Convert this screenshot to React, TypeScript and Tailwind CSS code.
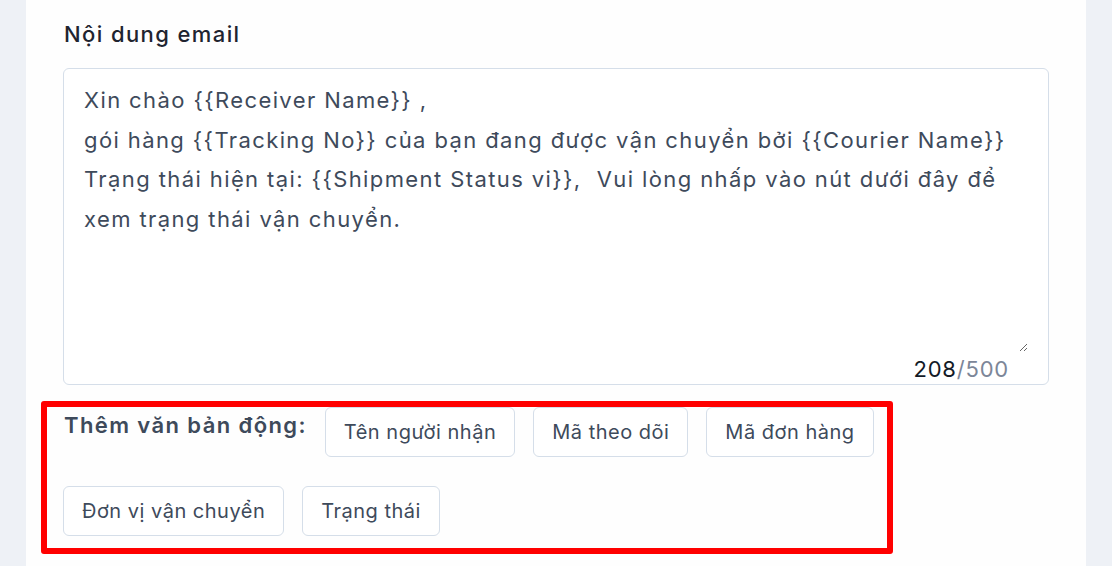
import React from "react";

const body =
  "Xin chào {{Receiver Name}} ,\ngói hàng {{Tracking No}} của bạn đang được vận chuyển bởi {{Courier Name}}\nTrạng thái hiện tại: {{Shipment Status vi}},  Vui lòng nhấp vào nút dưới đây để\nxem trạng thái vận chuyển.";

const tags = ["Tên người nhận", "Mã theo dõi", "Mã đơn hàng", "Đơn vị vận chuyển", "Trạng thái"];

export default function App() {
  return (
    <div className="w-full h-[566px] bg-[#eef1f6] px-[26px] flex overflow-hidden font-['Inter','Noto_Sans',sans-serif]">
      <div className="relative flex-1 h-full bg-[#fefefe] px-[37px] pt-[19px]">
        <div className="text-[22px] leading-[30px] font-medium tracking-[1.4px] text-[#1f2430] pl-[1px]">
          Nội dung email
        </div>
        <div className="mt-[19px] border border-[#d5dee9] rounded-[6px] bg-white h-[317px] flex flex-col px-[20px] pt-[12px]">
          <textarea
            wrap="off"
            readOnly
            defaultValue={body}
            className="block w-full h-[271px] resize-y overflow-hidden border-0 outline-none bg-transparent p-0 font-['Inter','Noto_Sans',sans-serif] text-[22px] leading-[39.5px] tracking-[1.4px] text-[#3e4a5b]"
          />
          <div className="flex justify-end pr-[19px] pt-[4px] text-[22px] leading-[26px] tracking-[0.8px]">
            <span className="text-[#131a27]">208</span>
            <span className="text-[#7c8698]">/500</span>
          </div>
        </div>
        <div className="mt-[22px] flex flex-wrap items-start gap-x-[18px] gap-y-[29px]">
          <div className="text-[22px] leading-[28px] font-semibold tracking-[1.4px] text-[#3e4a5b] pt-[4px] pl-[1px]">
            Thêm văn bản động:
          </div>
          {tags.map((t) => (
            <button
              key={t}
              className="h-[50px] px-[18px] border border-[#d5dee9] rounded-[6px] bg-white text-[20px] tracking-[0.5px] text-[#3e4a5b]"
            >
              {t}
            </button>
          ))}
        </div>
        <div className="absolute left-[15px] top-[401px] w-[852px] h-[153px] border-[6px] border-[#ff0000] rounded-[3px] pointer-events-none" />
      </div>
    </div>
  );
}
